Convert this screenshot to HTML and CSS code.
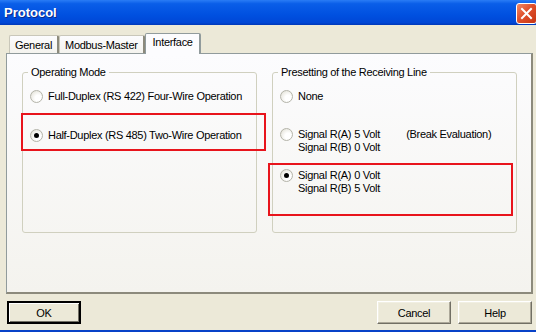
FILE: index.html
```html
<!DOCTYPE html>
<html>
	<head>
		<title>Protocol</title>
		<link rel="stylesheet" href="styles.css">
	</head>
	<body>
		<div class="window">
			<div class="titlebar">
				<span class="title">Protocol</span>
				<span class="close">
					<svg width="21" height="21" viewBox="0 0 21 21">
						<path d="M6 6 L15 15 M15 6 L6 15" stroke="#fff" stroke-width="2" stroke-linecap="square"/>
					</svg>
				</span>
			</div>

			<div class="tabs">
				<div class="tab">General</div>
				<div class="tab">Modbus-Master</div>
				<div class="tab selected">Interface</div>
			</div>

			<div class="panel">
				<fieldset class="group left">
					<legend>Operating Mode</legend>
					<div class="option first">
						<span class="radio"></span>
						<span>Full-Duplex (RS 422) Four-Wire Operation</span>
					</div>
					<div class="option second marked">
						<span class="radio checked"></span>
						<span>Half-Duplex (RS 485) Two-Wire Operation</span>
					</div>
				</fieldset>

				<fieldset class="group right">
					<legend>Presetting of the Receiving Line</legend>
					<div class="option first">
						<span class="radio"></span>
						<span>None</span>
					</div>
					<div class="option second">
						<span class="radio"></span>
						<div class="lines">
							<div><span class="c1">Signal</span><span class="c2">R(A)</span><span class="c3">5 Volt</span>(Break Evaluation)</div>
							<div><span class="c1">Signal</span><span class="c2">R(B)</span><span class="c3">0 Volt</span></div>
						</div>
					</div>
					<div class="option third marked">
						<span class="radio checked"></span>
						<div class="lines">
							<div><span class="c1">Signal</span><span class="c2">R(A)</span><span class="c3">0 Volt</span></div>
							<div><span class="c1">Signal</span><span class="c2">R(B)</span><span class="c3">5 Volt</span></div>
						</div>
					</div>
				</fieldset>
			</div>

			<div class="buttons">
				<button class="btn default">OK</button>
				<span class="spacer"></span>
				<button class="btn">Cancel</button>
				<button class="btn">Help</button>
			</div>
		</div>
	</body>
</html>
```

FILE: styles.css
```css
*
	{
		box-sizing: border-box;
	}
body
	{
		margin: 0;
		background-color: #ece9d8;
		font-family: "Liberation Sans", Arial, sans-serif;
		font-size: 11px;
		letter-spacing: -0.3px;
		color: #000;
	}
.window
	{
		width: 536px;
		height: 332px;
		border-bottom: 2px solid #0842c8;
		overflow: hidden;
	}
.titlebar
	{
		height: 25px;
		display: flex;
		align-items: center;
		justify-content: space-between;
		padding-left: 4px;
		background: linear-gradient(#2a7cf5 0%, #0a5ee8 15%, #0050e0 60%, #0047d6 90%, #0038b8 100%);
	}
.title
	{
		color: #fff;
		font-weight: bold;
		font-size: 13px;
		letter-spacing: 0;
		text-shadow: 1px 1px 0 #0a2a8a;
		margin-top: -1px;
	}
.close
	{
		width: 21px;
		height: 21px;
		margin-right: -1px;
		margin-top: 1px;
		border: 1px solid #fff;
		border-radius: 3px;
		background: linear-gradient(135deg, #f08a68 0%, #e0502c 45%, #c73512 100%);
		display: flex;
		align-items: center;
		justify-content: center;
	}
.close svg
	{
		display: block;
		margin: -1px;
	}
.tabs
	{
		display: flex;
		align-items: flex-end;
		height: 28px;
		padding-left: 9px;
		padding-top: 8px;
	}
.tab
	{
		height: 18px;
		padding: 3px 5px 0 5px;
		border: 1px solid #c9c7ba;
		border-bottom: none;
		border-right: 2px solid #8c8a7c;
		border-radius: 2px 2px 0 0;
		background: linear-gradient(#fcfcfe, #f4f3ee);
	}
.tab.selected
	{
		height: 21px;
		padding: 2px 6px 0 7px;
		background: #fcfcfe;
		position: relative;
		margin-bottom: -1px;
		border-color: #919b9c;
	}
.panel
	{
		margin-left: 6px;
		width: 527px;
		height: 241px;
		border: 1px solid #919b9c;
		border-right: 2px solid #8c8a7c;
		border-bottom: 2px solid #8c8a7c;
		display: flex;
		padding: 12px 14px 0 15px;
		gap: 15px;
		background: linear-gradient(#fcfcfe, #f4f3ee);
	}
.group
	{
		margin: 0;
		height: 167px;
		border: 1px solid #d0d0bf;
		border-radius: 3px;
		padding: 0;
	}
.group.left
	{
		width: 235px;
	}
.group.right
	{
		width: 245px;
	}
legend
	{
		margin-left: 5px;
		padding: 0 3px 0 3px;
		line-height: 13px;
	}
.option
	{
		display: flex;
		align-items: flex-start;
		gap: 5px;
		margin-left: 7px;
		line-height: 13px;
		white-space: nowrap;
	}
.option.first
	{
		margin-top: 11px;
	}
.left .option.second
	{
		margin-top: 26px;
	}
.right .option.second
	{
		margin-top: 25px;
	}
.right .option.third
	{
		margin-top: 15px;
	}
.option.marked
	{
		position: relative;
	}
.option.marked::before
	{
		content: "";
		position: absolute;
		border: 2px solid #e8141c;
		pointer-events: none;
	}
.left .option.marked::before
	{
		left: -9px;
		top: -16px;
		width: 241px;
		height: 34px;
	}
.right .option.marked::before
	{
		left: -12px;
		top: -6px;
		width: 241px;
		height: 49px;
	}
.radio
	{
		width: 13px;
		height: 13px;
		flex: none;
		border-radius: 50%;
		border: 1px solid #b4b4aa;
		background: radial-gradient(circle at 65% 65%, #ffffff 30%, #ecebe4 70%, #d4d2c8 100%);
		position: relative;
	}
.radio.checked::after
	{
		content: "";
		position: absolute;
		left: 3px;
		top: 3px;
		width: 5px;
		height: 5px;
		border-radius: 50%;
		background: #000;
	}
.c1
	{
		display: inline-block;
		margin-right: 3px;
	}
.c2
	{
		display: inline-block;
		margin-right: 3px;
	}
.c3
	{
		display: inline-block;
		width: 52px;
	}
.buttons
	{
		display: flex;
		padding: 7px 4px 0 7px;
		gap: 7px;
	}
.spacer
	{
		flex: 1;
	}
.btn
	{
		width: 74px;
		height: 23px;
		font-family: inherit;
		font-size: 11px;
		letter-spacing: -0.3px;
		color: #000;
		background: #ece9d8;
		border: 1px solid;
		border-color: #fff #716f64 #716f64 #fff;
		box-shadow: inset -1px -1px 0 #aca899, inset 1px 1px 0 #f1efe2;
		padding: 0;
	}
.btn.default
	{
		border: 2px solid #000;
		box-shadow: inset 1px 1px 0 #fff, inset -1px -1px 0 #716f64;
	}
```
